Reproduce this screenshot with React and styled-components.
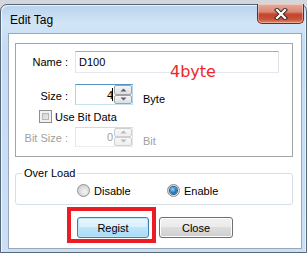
import React from 'react';
import styled, { createGlobalStyle, css } from 'styled-components';

const Global = createGlobalStyle`
  html, body { margin: 0; padding: 0; }
  body {
    background: #d3d6da;
    width: 307px;
    height: 253px;
    overflow: hidden;
    font-family: "Liberation Sans", Arial, sans-serif;
    font-size: 11px;
    color: #000;
  }
  * { box-sizing: border-box; }
`;

const Window = styled.div`
  margin-top: 4px;
  width: 307px;
  height: 249px;
  border: 1px solid #56677a;
  border-radius: 7px 7px 0 0;
  background: linear-gradient(180deg, #b8d2ee 0px, #d2e5f7 18px, #c6dcf3 40px, #cbe0f5 100%);
  box-shadow: inset 1px 1px 0 rgba(255, 255, 255, 0.7), inset -1px 0 0 rgba(255, 255, 255, 0.5);
  padding: 0 4px 3px 7px;
  display: flex;
  flex-direction: column;
`;

const TitleBar = styled.div`
  height: 28px;
  flex: none;
  display: flex;
  justify-content: space-between;
  align-items: flex-start;
`;

const TitleText = styled.div`
  margin-top: 7px;
  padding-left: 2px;
  font-size: 12px;
  line-height: 16px;
  color: #000;
`;

const CloseBtn = styled.div`
  width: 47px;
  height: 20px;
  margin-top: -1px;
  margin-right: -2px;
  border: 1px solid #6e2b22;
  border-top: none;
  border-radius: 0 0 5px 5px;
  background: linear-gradient(180deg, #e7ab9d 0%, #d98a77 40%, #c4442d 55%, #c9513a 80%, #e08a66 100%);
  box-shadow: inset 0 0 0 1px rgba(255, 255, 255, 0.35);
  display: flex;
  align-items: center;
  justify-content: center;
`;

const Client = styled.div`
  flex: 1;
  border: 1px solid #9aa9ba;
  background: #ffffff;
  padding: 9px 8px 0 6px;
  display: flex;
  flex-direction: column;
`;

const Frame = styled.div`
  position: relative;
  width: 278px;
  border: 1px solid #a4a4a4;
  box-shadow: inset 1px 1px 0 #ffffff;
  padding: 7px 0 9px 0;
  display: flex;
  flex-direction: column;
`;

const Row = styled.div`
  display: flex;
  align-items: center;
  margin-top: ${(p) => p.$mt || 0}px;
`;

const Label = styled.div`
  width: 52px;
  margin-right: 7px;
  text-align: right;
  white-space: nowrap;
  padding-top: ${(p) => p.$drop || 0}px;
  color: ${(p) => (p.$disabled ? '#a0a0a0' : '#000')};
`;

const TextBox = styled.div`
  width: 204px;
  height: 22px;
  border: 1px solid;
  border-color: #abadb3 #e2e3ea #e3e9ef #e2e3ea;
  padding-left: 3px;
  display: flex;
  align-items: center;
`;

const SpinBox = styled.div`
  width: 58px;
  height: ${(p) => p.$h}px;
  border: 1px solid;
  display: flex;
  ${(p) =>
    p.$focused
      ? css`border-color: #5794bf #b7d5ea #c7e2f1 #b5cfe7;`
      : css`border-color: #d9d9d9 #e6e6e6 #ececec #e6e6e6;`}
`;

const ValueArea = styled.div`
  flex: 1;
  display: flex;
  justify-content: flex-end;
  align-items: center;
  padding-right: 1px;
  color: ${(p) => (p.$disabled ? '#a0a0a0' : '#000')};
`;

const Caret = styled.span`
  width: 1px;
  height: 13px;
  background: #000;
  margin-left: -1px;
`;

const SpinCol = styled.div`
  width: 18px;
  display: flex;
  flex-direction: column;
`;

const SpinBtn = styled.div`
  flex: 1;
  border: 1px solid ${(p) => (p.$disabled ? '#cfcfcf' : '#a3a3a3')};
  border-radius: 2px;
  background: ${(p) =>
    p.$disabled
      ? 'linear-gradient(180deg, #f7f7f7, #efefef)'
      : 'linear-gradient(180deg, #f6f6f6, #dedede)'};
  display: flex;
  align-items: center;
  justify-content: center;
`;

const Unit = styled.div`
  margin-left: 10px;
  padding-top: 9px;
  color: ${(p) => (p.$disabled ? '#a0a0a0' : '#000')};
`;

const CheckRow = styled.div`
  display: flex;
  align-items: center;
  gap: 3px;
  margin-top: 5px;
  padding-left: 23px;
`;

const CheckBox = styled.div`
  width: 13px;
  height: 13px;
  border: 1px solid #8e8f8f;
  background: linear-gradient(135deg, #cbcbcb, #f2f2f2);
  box-shadow: inset 0 0 0 2px #f1f1f1, inset 0 0 0 3px #b8b8b8;
`;

const Annotation = styled.div`
  position: absolute;
  left: 154px;
  top: 20px;
  font-family: "DejaVu Sans", sans-serif;
  font-size: 16px;
  line-height: 16px;
  color: #f0262b;
  pointer-events: none;
`;

const GroupSet = styled.fieldset`
  margin: 10px 0 0 0;
  width: 278px;
  border: 1px solid #d5dfe5;
  border-radius: 3px;
  padding: 4px 0 7px 0;
  min-width: 0;
`;

const Legend = styled.legend`
  padding: 0 2px;
  margin-left: 6px;
  line-height: 13px;
  font-size: 11px;
`;

const RadioRow = styled.div`
  display: flex;
  align-items: center;
  padding-left: 61px;
`;

const RadioOption = styled.label`
  display: flex;
  align-items: center;
  gap: 4px;
  width: ${(p) => p.$w || 'auto'};
`;

const Radio = styled.span`
  width: 13px;
  height: 13px;
  border-radius: 50%;
  border: 1px solid #8e8f8f;
  background: radial-gradient(circle at 60% 60%, #f4f4f4 0%, #dadada 55%, #c9c9c9 100%);
  display: flex;
  align-items: center;
  justify-content: center;
  &::after {
    content: '';
    display: ${(p) => (p.$checked ? 'block' : 'none')};
    width: 7px;
    height: 7px;
    border-radius: 50%;
    background: radial-gradient(circle at 40% 35%, #9fd6ff 0%, #2c86c9 45%, #0f4a86 100%);
    box-shadow: 0 0 0 1px #2a5f8f;
  }
`;

const ButtonRow = styled.div`
  position: relative;
  display: flex;
  gap: 10px;
  margin-top: 12px;
  padding-left: 62px;
`;

const Button = styled.button`
  width: ${(p) => p.$w}px;
  height: 21px;
  padding: 0;
  font-family: "Liberation Sans", Arial, sans-serif;
  font-size: 11px;
  color: #000;
  border-radius: 3px;
  ${(p) =>
    p.$default
      ? css`
          border: 1px solid #3c7fb1;
          background: linear-gradient(180deg, #eaf6fd 0%, #d9f0fc 45%, #bee6fd 50%, #a7d9f5 100%);
          box-shadow: inset 0 0 0 1px #bde6fb;
        `
      : css`
          border: 1px solid #707070;
          background: linear-gradient(180deg, #f2f2f2 0%, #ebebeb 45%, #dddddd 50%, #cfcfcf 100%);
          box-shadow: inset 0 0 0 1px #fcfcfc;
        `}
`;

const RedBox = styled.div`
  position: absolute;
  left: 52px;
  top: -10px;
  width: 89px;
  height: 36px;
  border: 4px solid #ed1c24;
  pointer-events: none;
`;

const Arrow = ({ up, disabled }) => (
  <svg width="7" height="4" viewBox="0 0 7 4">
    <path
      d={up ? 'M0.5 3.5 L3.5 0.5 L6.5 3.5 Z' : 'M0.5 0.5 L3.5 3.5 L6.5 0.5 Z'}
      fill={disabled ? '#b8b8b8' : '#4d6185'}
    />
  </svg>
);

const Spinner = ({ disabled }) => (
  <SpinCol>
    <SpinBtn $disabled={disabled}>
      <Arrow up disabled={disabled} />
    </SpinBtn>
    <SpinBtn $disabled={disabled}>
      <Arrow disabled={disabled} />
    </SpinBtn>
  </SpinCol>
);

export default function App() {
  return (
    <>
      <Global />
      <Window>
        <TitleBar>
          <TitleText>Edit Tag</TitleText>
          <CloseBtn>
            <svg width="14" height="12" viewBox="0 0 14 12">
              <path d="M3 2 L11 10 M11 2 L3 10" stroke="#3b2a2a" strokeWidth="4.2" strokeLinecap="square" />
              <path d="M3 2 L11 10 M11 2 L3 10" stroke="#ffffff" strokeWidth="2.2" strokeLinecap="square" />
            </svg>
          </CloseBtn>
        </TitleBar>
        <Client>
          <Frame>
            <Row>
              <Label>Name :</Label>
              <TextBox>D100</TextBox>
            </Row>
            <Row $mt={11}>
              <Label $drop={2}>Size :</Label>
              <SpinBox $h={21} $focused>
                <ValueArea>
                  4<Caret />
                </ValueArea>
                <Spinner />
              </SpinBox>
              <Unit>Byte</Unit>
            </Row>
            <CheckRow>
              <CheckBox />
              <span>Use Bit Data</span>
            </CheckRow>
            <Row $mt={3}>
              <Label $drop={3} $disabled>Bit Size :</Label>
              <SpinBox $h={20}>
                <ValueArea $disabled>0</ValueArea>
                <Spinner disabled />
              </SpinBox>
              <Unit $disabled>Bit</Unit>
            </Row>
            <Annotation>4byte</Annotation>
          </Frame>
          <GroupSet>
            <Legend>Over Load</Legend>
            <RadioRow>
              <RadioOption $w="90px">
                <Radio />
                <span>Disable</span>
              </RadioOption>
              <RadioOption>
                <Radio $checked />
                <span>Enable</span>
              </RadioOption>
            </RadioRow>
          </GroupSet>
          <ButtonRow>
            <Button $w={72} $default>Regist</Button>
            <Button $w={74}>Close</Button>
            <RedBox />
          </ButtonRow>
        </Client>
      </Window>
    </>
  );
}
